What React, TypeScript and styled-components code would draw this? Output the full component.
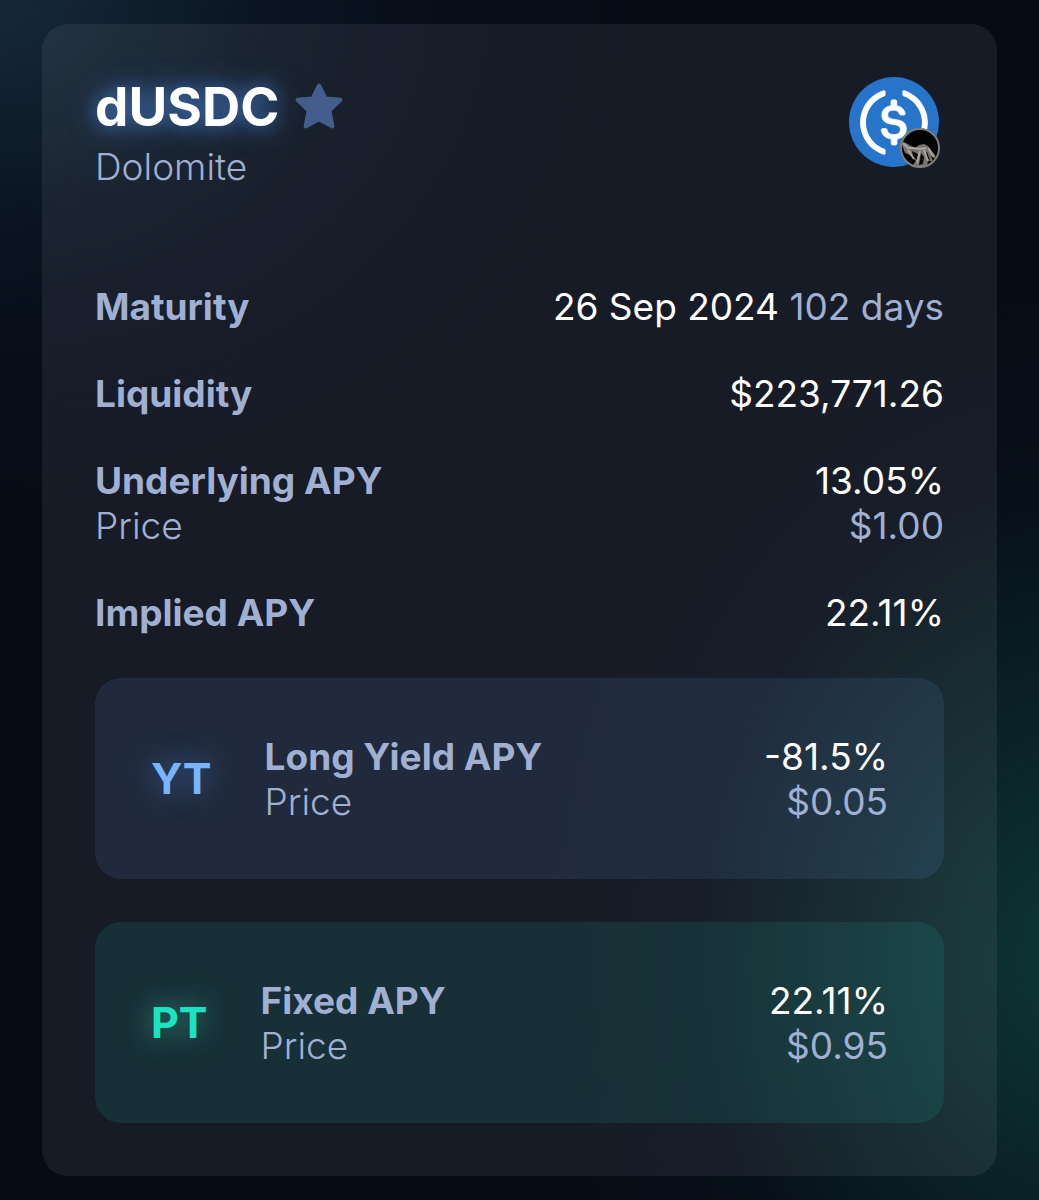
import React from 'react';
import styled, { createGlobalStyle, css } from 'styled-components';

const color = {
  text: '#ffffff',
  muted: '#a0b0d2',
  yt: '#78b4ff',
  pt: '#1be3c2',
  star: '#435e8d',
};

const GlobalStyle = createGlobalStyle`
  *, *::before, *::after { box-sizing: border-box; }
  body {
    margin: 0;
    min-height: 100vh;
    font-family: Inter, "Liberation Sans", sans-serif;
    font-size: 37px;
    line-height: 45px;
    color: ${color.text};
    background-color: #070b16;
    background-image:
      radial-gradient(ellipse 640px 520px at 0 0, rgba(24, 44, 60, 0.9), rgba(14, 32, 46, 0.5) 40%, rgba(10, 18, 34, 0.25) 70%, rgba(7, 11, 22, 0)),
      radial-gradient(ellipse 540px 680px at 104% 80%, rgba(14, 58, 58, 0.95), rgba(12, 50, 52, 0.6) 35%, rgba(8, 28, 36, 0.25) 70%, rgba(7, 11, 22, 0));
  }
  h2, p, dl, dt, dd { margin: 0; }
`;

const Page = styled.main`
  padding: 24px 42px;
`;

const Card = styled.article`
  display: flex;
  flex-direction: column;
  gap: 43px;
  padding: 53px;
  border-radius: 26px;
  background: rgba(240, 235, 255, 0.07);
`;

const Header = styled.header`
  display: flex;
  justify-content: space-between;
  align-items: flex-start;
  padding-bottom: 52px;
`;

const TitleBlock = styled.div`
  display: flex;
  flex-direction: column;
  gap: 7px;
`;

const TitleRow = styled.div`
  display: flex;
  align-items: center;
  gap: 16px;
`;

const Title = styled.h2`
  font-size: 53px;
  line-height: 60px;
  font-weight: 700;
  text-shadow: 0 0 28px rgba(80, 145, 240, 0.75), 0 0 16px rgba(80, 135, 215, 0.4);
`;

const StarButton = styled.button`
  display: flex;
  padding: 0;
  border: 0;
  background: none;
  color: ${color.star};
  cursor: pointer;
`;

const Protocol = styled.p`
  font-weight: 300;
  color: ${color.muted};
`;

const TokenIcon = styled.div`
  position: relative;
  display: flex;
  margin-right: 5px;
`;

const Badge = styled.svg`
  position: absolute;
  right: -2px;
  bottom: -2px;
`;

const Stats = styled.dl`
  display: flex;
  flex-direction: column;
  gap: 42px;
`;

const StatGroup = styled.div`
  flex: 1;
`;

const Stat = styled.div`
  display: flex;
  justify-content: space-between;
`;

const Label = styled.dt<{ $light?: boolean }>`
  font-weight: ${(p) => (p.$light ? 300 : 700)};
  color: ${color.muted};
`;

const Value = styled.dd<{ $muted?: boolean }>`
  text-align: right;
  ${(p) => p.$muted && css`color: ${color.muted};`}
`;

const Muted = styled.span`
  color: ${color.muted};
`;

const TokenCard = styled.section<{ $tint: string }>`
  display: flex;
  align-items: center;
  gap: 53px;
  min-height: 201px;
  padding: 0 56px;
  border-radius: 26px;
  background: ${(p) => p.$tint};
`;

const TokenName = styled.span<{ $color: string; $glow: string }>`
  font-size: 43px;
  font-weight: 700;
  color: ${(p) => p.$color};
  text-shadow: 0 0 28px ${(p) => p.$glow};
`;

const TokenStats = styled.dl`
  flex: 1;
`;

const StarIcon = () => (
  <svg width="48" height="48" viewBox="0 0 48 48" aria-hidden="true">
    <path
      d="M24 2.5 L30.4 15.4 L45.4 16.8 L34.4 27.6 L37.4 43.4 L24 36.2 L10.6 43.4 L13.6 27.6 L2.6 16.8 L17.6 15.4 Z"
      fill="currentColor"
      stroke="currentColor"
      strokeWidth="4"
      strokeLinejoin="round"
    />
  </svg>
);

const UsdcIcon = () => (
  <svg width="90" height="90" viewBox="0 0 2000 2000" role="img" aria-label="USDC">
    <circle cx="1000" cy="1000" r="1000" fill="#2775ca" />
    <path
      fill="#fff"
      stroke="#fff"
      strokeWidth="16"
      d="M1275 1158.33c0-145.83-87.5-195.83-262.5-216.66-125-16.67-150-50-150-108.34s41.67-95.83 125-95.83c75 0 116.67 25 137.5 87.5 4.17 12.5 16.67 20.83 29.17 20.83h66.66c16.67 0 29.17-12.5 29.17-29.16v-4.17c-16.67-91.67-91.67-162.5-187.5-170.83v-100c0-16.67-12.5-29.17-33.33-33.34h-62.5c-16.67 0-29.17 12.5-33.34 33.34v95.83c-125 16.67-204.16 100-204.16 204.17 0 137.5 83.33 191.66 258.33 212.5 116.67 20.83 154.17 45.83 154.17 112.5s-58.34 112.5-137.5 112.5c-108.34 0-145.84-45.84-158.34-108.34-4.16-16.66-16.66-25-29.16-25h-70.84c-16.66 0-29.16 12.5-29.16 29.17v4.17c16.66 104.16 83.33 179.16 220.83 200v100c0 16.66 12.5 29.16 33.33 33.33h62.5c16.67 0 29.17-12.5 33.34-33.33v-100c125-20.84 208.33-108.34 208.33-220.84z"
    />
    <path
      fill="#fff"
      d="M787.5 1595.83c-325-116.66-491.67-479.16-370.83-800 62.5-175 200-308.33 370.83-370.83 16.67-8.33 25-20.83 25-41.67V325c0-16.67-8.33-29.17-25-33.33-4.17 0-12.5 0-16.67 4.16-395.83 125-612.5 545.84-487.5 941.67 75 233.33 254.17 412.5 487.5 487.5 16.67 8.33 33.34 0 37.5-16.67 4.17-4.16 4.17-8.33 4.17-16.66v-58.34c0-12.5-12.5-29.16-25-37.5zM1229.17 295.83c-16.67-8.33-33.34 0-37.5 16.67-4.17 4.17-4.17 8.33-4.17 16.67v58.33c0 16.67 12.5 33.33 25 41.67 325 116.66 491.67 479.16 370.83 800-62.5 175-200 308.33-370.83 370.83-16.67 8.33-25 20.83-25 41.67V1700c0 16.67 8.33 29.17 25 33.33 4.17 0 12.5 0 16.67-4.16 395.83-125 612.5-545.84 487.5-941.67-75-237.5-258.34-416.67-487.5-491.67z"
    />
  </svg>
);

const DolomiteBadge = () => (
  <Badge width="41" height="41" viewBox="0 0 41 41" role="img" aria-label="Dolomite">
    <defs>
      <clipPath id="badge-disc">
        <circle cx="20" cy="20" r="19" />
      </clipPath>
    </defs>
    <circle cx="20" cy="20" r="19" fill="#030303" />
    <g clipPath="url(#badge-disc)">
      <path d="M1 14 L6 15 L11 18 L15 20 L19 17 L24 16 L28 18 L31 22 L35 27 L36 31 L31 28 L33 34 L28 32 L27 39 L22 39 L12 38 L16 33 L10 27 L5 25 Z" fill="#77736e" />
      <path d="M12 23 L18 26 L17 32 L13 29 Z M21 25 L24 29 L23 36 L19 37 Z M27 24 L30 32 L28 31 L25 26 Z" fill="#090909" />
      <path d="M3 15 L8 20 L13 20 L20 21 L26 20 M8 22 L14 31 M20 23 L17 35 M24 22 L28 33 M28 20 L34 29" stroke="#a9a5a0" strokeWidth="2" fill="none" />
    </g>
    <circle cx="20" cy="20" r="19" fill="none" stroke="#817d79" strokeWidth="2" />
  </Badge>
);

const tokens = [
  {
    name: 'YT',
    label: 'Long Yield APY',
    apy: '-81.5%',
    price: '$0.05',
    color: color.yt,
    glow: 'rgba(90, 155, 255, 0.6)',
    tint: 'rgba(119, 180, 255, 0.1)',
  },
  {
    name: 'PT',
    label: 'Fixed APY',
    apy: '22.11%',
    price: '$0.95',
    color: color.pt,
    glow: 'rgba(80, 225, 200, 0.6)',
    tint: 'rgba(27, 227, 194, 0.1)',
  },
];

export default function App() {
  return (
    <>
      <GlobalStyle />
      <Page>
        <Card>
          <Header>
            <TitleBlock>
              <TitleRow>
                <Title>dUSDC</Title>
                <StarButton type="button" aria-label="Add to favourites">
                  <StarIcon />
                </StarButton>
              </TitleRow>
              <Protocol>Dolomite</Protocol>
            </TitleBlock>
            <TokenIcon>
              <UsdcIcon />
              <DolomiteBadge />
            </TokenIcon>
          </Header>
          <Stats>
            <Stat>
              <Label>Maturity</Label>
              <Value>
                26 Sep 2024 <Muted>102 days</Muted>
              </Value>
            </Stat>
            <Stat>
              <Label>Liquidity</Label>
              <Value>$223,771.26</Value>
            </Stat>
            <StatGroup>
              <Stat>
                <Label>Underlying APY</Label>
                <Value>13.05%</Value>
              </Stat>
              <Stat>
                <Label $light>Price</Label>
                <Value $muted>$1.00</Value>
              </Stat>
            </StatGroup>
            <Stat>
              <Label>Implied APY</Label>
              <Value>22.11%</Value>
            </Stat>
          </Stats>
          {tokens.map((t) => (
            <TokenCard key={t.name} $tint={t.tint}>
              <TokenName $color={t.color} $glow={t.glow}>
                {t.name}
              </TokenName>
              <TokenStats>
                <Stat>
                  <Label>{t.label}</Label>
                  <Value>{t.apy}</Value>
                </Stat>
                <Stat>
                  <Label $light>Price</Label>
                  <Value $muted>{t.price}</Value>
                </Stat>
              </TokenStats>
            </TokenCard>
          ))}
        </Card>
      </Page>
    </>
  );
}
